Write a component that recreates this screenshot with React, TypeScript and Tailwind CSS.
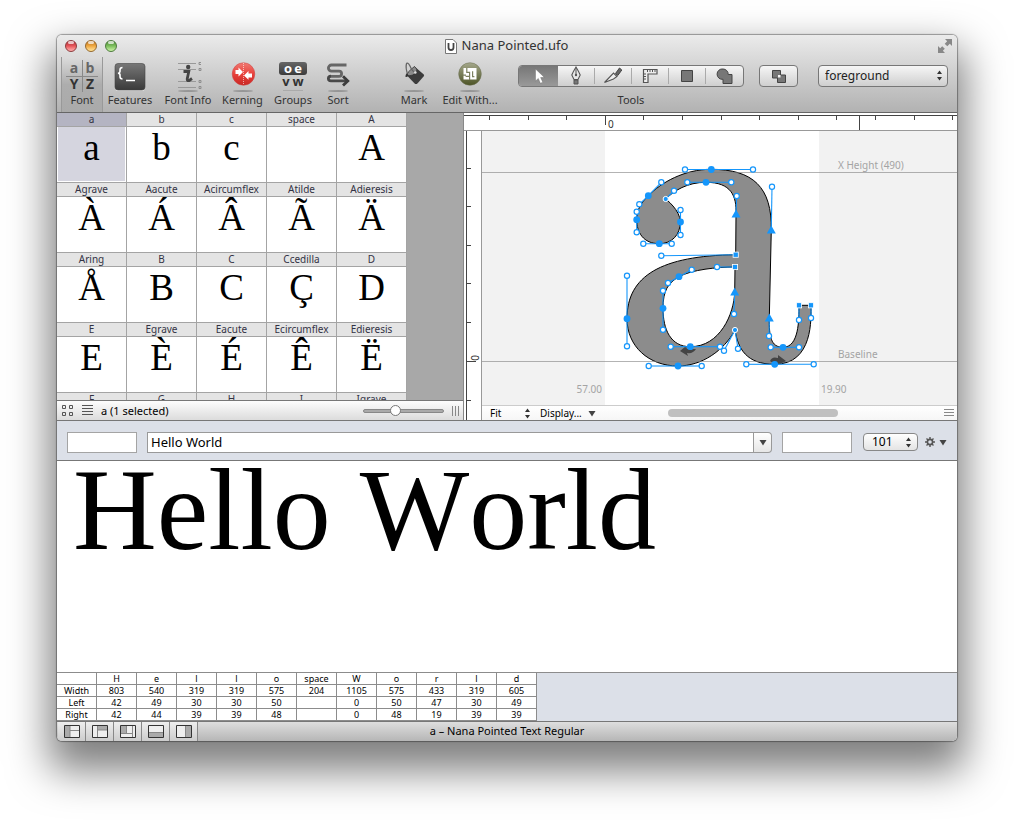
import React, { useState } from "react";

const rows: [string, string][][] = [
  [["a", "a"], ["b", "b"], ["c", "c"], ["space", ""], ["A", "A"]],
  [["Agrave", "À"], ["Aacute", "Á"], ["Acircumflex", "Â"], ["Atilde", "Ã"], ["Adieresis", "Ä"]],
  [["Aring", "Å"], ["B", "B"], ["C", "C"], ["Ccedilla", "Ç"], ["D", "D"]],
  [["E", "E"], ["Egrave", "È"], ["Eacute", "É"], ["Ecircumflex", "Ê"], ["Edieresis", "Ë"]],
  [["F", "F"], ["G", "G"], ["H", "H"], ["I", "I"], ["Igrave", "Ì"]],
];

const metrics: { label: string; values: string[] }[] = [
  { label: "Width", values: ["803", "540", "319", "319", "575", "204", "1105", "575", "433", "319", "605"] },
  { label: "Left", values: ["42", "49", "30", "30", "50", "", "0", "50", "47", "30", "49"] },
  { label: "Right", values: ["42", "44", "39", "39", "48", "", "0", "48", "19", "39", "39"] },
];
const metricHeads = ["H", "e", "l", "l", "o", "space", "W", "o", "r", "l", "d"];

/* ---------- toolbar icons ---------- */

function Shadow() {
  return <ellipse cx="16" cy="31" rx="10" ry="1" fill="#000" opacity="0.22" />;
}

function FontIcon() {
  return (
    <span className="relative grid h-8 w-8 grid-cols-2 grid-rows-2 place-items-center font-['Open_Sans',sans-serif] text-[14px] font-bold leading-4">
      <span className="text-[#666]">a</span>
      <span className="text-[#666]">b</span>
      <span className="text-[#333]">Y</span>
      <span className="text-[#333]">Z</span>
      <span className="absolute inset-x-0 top-4 h-px bg-[#888]" />
      <span className="absolute inset-y-0 left-4 w-px bg-[#888]" />
    </span>
  );
}

function FeaturesIcon() {
  return (
    <svg width="32" height="32" viewBox="0 0 32 32" aria-hidden="true">
      <defs>
        <linearGradient id="feat" x1="0" y1="0" x2="0" y2="1">
          <stop offset="0" stopColor="#777" />
          <stop offset="1" stopColor="#3a3a3a" />
        </linearGradient>
      </defs>
      <rect x="1" y="4.5" width="30" height="26.5" rx="3" fill="#f4f4f4" opacity="0.7" />
      <rect x="1" y="3.5" width="30" height="26.5" rx="3" fill="url(#feat)" stroke="#444" strokeWidth="0.6" />
      <path d="M8.5 7.5 Q6 7.5 6 9.8 V11.4 Q6 13 4 13.2 Q6 13.4 6 15 V16.6 Q6 19 8.5 19" fill="none" stroke="#fff" strokeWidth="1.6" />
      <path d="M12 20.5 H21" stroke="#fff" strokeWidth="1.6" />
    </svg>
  );
}

function InfoIcon() {
  return (
    <svg width="32" height="32" viewBox="0 0 32 32" aria-hidden="true">
      <Shadow />
      <path d="M6 3.5 H24 M6 9.5 H24 M6 21.5 H24 M6 27.5 H24" stroke="#999" />
      <path d="M29 2.5 H27 V4.5 H29 M27 8.5 H29 V10.5 H27 Z M27 20.5 H29 V22.5 H27 Z M27 26.5 H29 V28.5 H27 Z" fill="none" stroke="#888" strokeWidth="0.9" />
      <circle cx="16.2" cy="7" r="2.2" fill="#444" />
      <path d="M11.5 11.5 H16.8 L15.2 19 Q15 21 17 20.6 L20 18.5" fill="none" stroke="#444" strokeWidth="2.8" />
    </svg>
  );
}

function KerningIcon() {
  return (
    <svg width="32" height="32" viewBox="0 0 32 32" aria-hidden="true">
      <defs>
        <linearGradient id="kern" x1="0" y1="0" x2="0" y2="1">
          <stop offset="0" stopColor="#f07a72" />
          <stop offset="0.5" stopColor="#e8413c" />
          <stop offset="1" stopColor="#c92824" />
        </linearGradient>
      </defs>
      <Shadow />
      <circle cx="16.5" cy="14" r="11.3" fill="url(#kern)" stroke="#c44" strokeWidth="0.5" />
      <path d="M16.5 3 V25" stroke="#fff" strokeDasharray="1 1" opacity="0.6" />
      <path d="M8.5 10 H11.5 V7.6 L16 12 L11.5 16.4 V14 H8.5 Z" fill="#fff" />
      <path d="M25 13.4 H21.5 V11 L17 15.4 L21.5 19.8 V17.4 H25 Z" fill="#fff" />
    </svg>
  );
}

function GroupsIcon() {
  return (
    <span className="flex h-8 w-8 flex-col items-center font-['Open_Sans',sans-serif] text-[13px] font-bold leading-3">
      <span className="mt-0.5 flex h-[13px] w-7 justify-around rounded-[3px] bg-linear-to-b from-[#666] to-[#3c3c3c] px-1 text-white">
        <span>o</span>
        <span>e</span>
      </span>
      <span className="flex w-7 justify-around px-0.5 text-[#333]">
        <span>v</span>
        <span>w</span>
      </span>
      <span className="mt-[3px] h-px w-5 bg-[#aaa]" />
    </span>
  );
}

function SortIcon() {
  return (
    <svg width="32" height="32" viewBox="0 0 32 32" aria-hidden="true">
      <Shadow />
      <path
        d="M24.5 5 H9.5 A3.1 3.1 0 0 0 9.5 11.2 H17 A2.6 2.6 0 0 1 17 16.4 H7.5"
        fill="none"
        stroke="#666"
        strokeWidth="2.8"
      />
      <path d="M9 16.2 Q6.4 16.2 6.4 18.5 Q6.4 20.9 9 20.9 H25" fill="none" stroke="#484848" strokeWidth="2.8" />
      <path d="M21 16.2 L25.8 20.9 L21 25.6" fill="none" stroke="#3c3c3c" strokeWidth="2.8" />
    </svg>
  );
}

function MarkIcon() {
  return (
    <svg width="32" height="32" viewBox="0 0 32 32" aria-hidden="true">
      <Shadow />
      <path d="M16.5 6.5 L25.8 14.6 Q26.5 15.5 25.6 16.6 L19.4 23.4 Q18 24.6 16.6 23.4 L9 15.5 Z" fill="#3c3c3c" />
      <path d="M16.5 6.5 Q20 9 18.5 12 Q15 16.5 9 15.5 Q9 12 16.5 6.5 Z" fill="#8c8c8c" stroke="#333" strokeWidth="0.8" />
      <path d="M17 12.5 Q14 11 12 6 Q9.5 1.5 8.4 4 Q7.5 8 9.5 14" fill="none" stroke="#666" strokeWidth="1.3" />
      <path d="M9 13 Q7 15 7.5 17 Q9 17.5 10.5 15.5 Z" fill="#333" />
      <circle cx="17.3" cy="12.5" r="1.3" fill="#ddd" />
    </svg>
  );
}

function EditIcon() {
  return (
    <svg width="32" height="32" viewBox="0 0 32 32" aria-hidden="true">
      <defs>
        <linearGradient id="edit" x1="0" y1="0" x2="0" y2="1">
          <stop offset="0" stopColor="#a5a88c" />
          <stop offset="1" stopColor="#4d5426" />
        </linearGradient>
      </defs>
      <Shadow />
      <circle cx="16" cy="14" r="11.3" fill="url(#edit)" stroke="#666a4c" strokeWidth="0.5" />
      <path d="M9.5 8 H22.5 V19.5 H9.5 Z" fill="#fff" />
      <path d="M9 15.2 H12 M12.8 8 V12.4 H15.6 V16.4 H11.6 M15.6 16.4 V20 M18.6 11.2 V16.6 H20.4" fill="none" stroke="#7c8160" strokeWidth="1.2" />
    </svg>
  );
}

function ToolItem({ label, icon, className }: { label: string; icon: React.ReactNode; className: string }) {
  return (
    <button type="button" className={`flex flex-col items-center pt-[3px] ${className}`}>
      {icon}
      <span className="whitespace-nowrap text-[11px] leading-4 text-[#333]">{label}</span>
    </button>
  );
}

/* ---------- drawing tools ---------- */

const tools: { name: string; icon: React.ReactNode }[] = [
  {
    name: "Edit",
    icon: (
      <path d="M6.5 3 V15 L9.3 12.4 L11.4 17.3 L13.8 16.2 L11.6 11.6 L15.2 11.2 Z" fill="#fff" stroke="#666" strokeWidth="0.4" />
    ),
  },
  {
    name: "Bezier",
    icon: (
      <>
        <path d="M10 1 Q7 6 5.8 9 L8 13.5 H12 L14.2 9 Q13 6 10 1 Z" fill="#e8e8e8" stroke="#555" strokeWidth="1.1" />
        <path d="M10 2 V9" stroke="#555" />
        <circle cx="10" cy="9" r="1.2" fill="#555" />
        <path d="M8 14 H12 V18 H8 Z" fill="#777" stroke="#555" />
      </>
    ),
  },
  {
    name: "Slice",
    icon: (
      <>
        <path d="M12.5 7.5 L16.5 2 L18.8 4 L14.8 9.5 Z" fill="#666" stroke="#444" />
        <path d="M1.5 16.5 L10.5 7 L14 10.5 L10.5 13 Z" fill="#eee" stroke="#555" strokeWidth="1.1" />
      </>
    ),
  },
  {
    name: "Measure",
    icon: (
      <>
        <path d="M3.5 3.5 H17 V8 H8 V16.5 H3.5 Z" fill="#eee" stroke="#555" strokeWidth="1.2" />
        <path d="M7.5 4 V6 M10 4 V6 M12.5 4 V6 M15 4 V6 M4 8 H6 M4 10.5 H6 M4 13 H6" stroke="#555" />
      </>
    ),
  },
  { name: "Square", icon: <path d="M4.5 4.5 H15.5 V15.5 H4.5 Z" fill="#777" stroke="#444" /> },
  {
    name: "Shape",
    icon: (
      <path d="M8 3 A5.2 5.2 0 0 1 13.2 8.5 H17 V17.5 H8 V13.3 A5.2 5.2 0 1 1 8 3 Z" fill="#777" stroke="#444" />
    ),
  },
];

function DrawingTools() {
  const [active, setActive] = useState(0);
  return (
    <div className="ml-1.5 flex flex-col items-center pt-2">
      <div className="flex h-[22px] rounded border border-[#777] bg-linear-to-b from-[#f6f6f6] to-[#cfcfcf]">
        {tools.map((t, i) => (
          <button
            key={t.name}
            type="button"
            aria-label={t.name}
            aria-pressed={i === active}
            onClick={() => setActive(i)}
            className={`flex items-center ${i === 0 ? "w-[39px] rounded-l-[3px]" : "w-[37px]"} ${
              i === active ? "bg-linear-to-b from-[#777] to-[#999]" : ""
            }`}
          >
            <span className="flex flex-1 justify-center">
              <svg width="20" height="20" viewBox="0 0 20 20" aria-hidden="true">{t.icon}</svg>
            </span>
            {i > 0 && i < 5 && <span className="h-4 w-px bg-[#aaa]" />}
          </button>
        ))}
      </div>
      <span className="mt-[5px] text-[11px] leading-4 text-[#333]">Tools</span>
    </div>
  );
}

function UpDown({ className }: { className: string }) {
  return (
    <svg width="7" height="11" viewBox="0 0 7 11" aria-hidden="true" className={className}>
      <path d="M3.5 0.5 L6 4 H1 Z M3.5 10.5 L6 7 H1 Z" fill="#333" />
    </svg>
  );
}

function DownArrow() {
  return (
    <svg width="8" height="7" viewBox="0 0 8 7" aria-hidden="true">
      <path d="M0.5 1 H7.5 L4 6.5 Z" fill="#444" />
    </svg>
  );
}

function TitleBar() {
  const lights = [
    "from-[#a83038] via-[#e8555a] to-[#ffb0b0] border-[#8c3a3c]",
    "from-[#b9731f] via-[#f0a840] to-[#ffe69a] border-[#94672c]",
    "from-[#4d8838] via-[#7cbf5c] to-[#cdf5a8] border-[#4c7a3c]",
  ];
  return (
    <div className="flex h-[22px] items-center pl-2 pr-1">
      <div className="flex w-16 gap-2">
        {["Close", "Minimize", "Zoom"].map((n, i) => (
          <button key={n} type="button" aria-label={n} className={`relative h-3 w-3 rounded-full border bg-linear-to-b ${lights[i]}`}>
            <span className="absolute left-[2px] top-0 h-[3px] w-1.5 rounded-full bg-white/70" />
          </button>
        ))}
      </div>
      <h1 className="flex flex-1 items-center justify-center gap-1 text-[13px] text-[#333]">
        <svg width="14" height="17" viewBox="0 0 14 17" aria-hidden="true">
          <path d="M1.5 1.5 H9 L12.5 5 V15.5 H1.5 Z" fill="#fff" stroke="#777" />
          <path d="M4.5 5 V9.5 Q4.5 12 7 12 T9.5 9.5 V5" fill="none" stroke="#444" strokeWidth="1.8" />
        </svg>
        Nana Pointed.ufo
      </h1>
      <div className="flex w-[70px] justify-end">
        <button type="button" aria-label="Full screen">
          <svg width="16" height="16" viewBox="0 0 16 16" aria-hidden="true">
            <path d="M8 1 H15 V8 L12.8 5.8 L10.3 8.3 L7.7 5.7 L10.2 3.2 Z" fill="#888" />
            <path d="M8 15 H1 V8 L3.2 10.2 L5.2 8.2 L7.8 10.8 L5.8 12.8 Z" fill="#888" />
          </svg>
        </button>
      </div>
    </div>
  );
}

function Toolbar() {
  return (
    <div className="flex h-[55px] items-stretch pl-1 pr-[9px]">
      <ToolItem
        label="Font"
        icon={<FontIcon />}
        className="w-[42px] border-x border-[#999] bg-linear-to-b from-[#dcdcdc] via-[#adadad] to-[#aaa]"
      />
      <ToolItem label="Features" icon={<FeaturesIcon />} className="w-[54px]" />
      <ToolItem label="Font Info" icon={<InfoIcon />} className="w-[62px]" />
      <ToolItem label="Kerning" icon={<KerningIcon />} className="w-[47px]" />
      <ToolItem label="Groups" icon={<GroupsIcon />} className="w-[54px]" />
      <ToolItem label="Sort" icon={<SortIcon />} className="w-9" />
      <ToolItem label="Mark" icon={<MarkIcon />} className="ml-11 w-7" />
      <ToolItem label="Edit With..." icon={<EditIcon />} className="w-[84px]" />
      <DrawingTools />
      <button
        type="button"
        aria-label="Boolean operations"
        className="ml-[15px] mt-2 flex h-[22px] w-[39px] items-center justify-center rounded border border-[#777] bg-linear-to-b from-[#f6f6f6] to-[#cfcfcf]"
      >
        <svg width="16" height="16" viewBox="0 0 16 16" aria-hidden="true">
          <path d="M1.5 2.5 H9.5 V7 H14.5 V14.5 H6.5 V10 H1.5 Z" fill="#777" stroke="#444" />
          <path d="M7 7 H9.5 V9.5 H7 Z" fill="#f4f4f4" />
        </svg>
      </button>
      <div className="relative ml-auto mt-2 h-[22px] w-[130px]">
        <select
          aria-label="Layer"
          className="block h-[22px] w-full appearance-none rounded border border-[#777] bg-linear-to-b from-[#f6f6f6] to-[#cfcfcf] px-1.5 text-[12px] leading-5 text-[#222]"
        >
          <option>foreground</option>
          <option>background</option>
        </select>
        <UpDown className="pointer-events-none absolute right-[5px] top-[5px]" />
      </div>
    </div>
  );
}

/* ---------- glyph overview ---------- */

function GlyphGrid() {
  const [selected, setSelected] = useState("a");
  return (
    <section className="flex w-[407px] shrink-0 flex-col border-r border-[#888]">
      <div className="flex-1 overflow-hidden bg-[#a8a8a8]">
        <div className="grid w-[350px] grid-cols-5">
          {rows.flat().map(([name, glyph]) => {
            const on = name === selected;
            return (
              <button
                key={name}
                type="button"
                onClick={() => setSelected(name)}
                className="flex h-[70px] flex-col border-b border-r border-[#a4a4a4] bg-white"
              >
                <span
                  className={`h-[14px] w-full border-b border-[#a4a4a4] text-center text-[10px] leading-[13px] text-[#334] ${
                    on ? "bg-[#b4b4c2]" : "bg-[#e4e4e4]"
                  }`}
                >
                  {name}
                </span>
                <span
                  className={`w-full flex-1 overflow-hidden border border-t-0 text-center font-['Liberation_Serif',serif] text-[37px] leading-[41px] text-black ${
                    on ? "border-white bg-[#d5d5df]" : "border-transparent"
                  }`}
                >
                  {glyph}
                </span>
              </button>
            );
          })}
        </div>
      </div>
      <div className="flex h-5 items-center border-t border-[#777] bg-linear-to-b from-[#fdfdfd] to-[#dcdcdc] pl-1 pr-[3px]">
        <button type="button" aria-label="Grid view">
          <svg width="13" height="13" viewBox="0 0 13 13" aria-hidden="true">
            <path d="M1.5 1.5 h3 v3 h-3 Z M8.5 1.5 h3 v3 h-3 Z M1.5 8.5 h3 v3 h-3 Z M8.5 8.5 h3 v3 h-3 Z" fill="none" stroke="#555" />
          </svg>
        </button>
        <button type="button" aria-label="List view" className="ml-2">
          <svg width="11" height="11" viewBox="0 0 11 11" aria-hidden="true">
            <path d="M0 0.5 H11 M0 3.5 H11 M0 6.5 H11 M0 9.5 H11" stroke="#555" />
          </svg>
        </button>
        <span className="ml-2 text-[11px] leading-4">a (1 selected)</span>
        <input
          type="range"
          aria-label="Cell size"
          defaultValue={38}
          className="ml-auto h-[4px] w-[81px] appearance-none rounded-full border border-[#888] bg-[#aaa] [&::-webkit-slider-thumb]:h-[11px] [&::-webkit-slider-thumb]:w-[11px] [&::-webkit-slider-thumb]:appearance-none [&::-webkit-slider-thumb]:rounded-full [&::-webkit-slider-thumb]:border [&::-webkit-slider-thumb]:border-[#777] [&::-webkit-slider-thumb]:bg-white"
        />
        <svg width="8" height="10" viewBox="0 0 8 10" aria-hidden="true" className="ml-2">
          <path d="M0.5 0 V10 M3.5 0 V10 M6.5 0 V10" stroke="#888" />
        </svg>
      </div>
    </section>
  );
}

/* ---------- glyph editor ---------- */

type P = [number, number];
const handles: [P, P][] = [
  [[711, 169.5], [685, 169.5]], [[711, 169.5], [753, 169.5]],
  [[648.3, 195.7], [661.3, 182.3]], [[648.3, 195.7], [639.3, 204.3]],
  [[636.7, 219.7], [636.7, 211.7]], [[636.7, 219.7], [636.7, 232.3]],
  [[659.3, 243.7], [643.3, 243.7]], [[659.3, 243.7], [671.7, 243.7]],
  [[680.5, 222], [680.5, 210]], [[680.5, 222], [680.5, 235]],
  [[665.7, 199], [674, 190.7]],
  [[706, 182.3], [687.3, 182.3]], [[706, 182.3], [731.3, 182.3]],
  [[736, 214], [736.7, 196]], [[771.3, 230], [772, 186.7]],
  [[735.7, 254.7], [661.3, 255.7]], [[735, 267], [717, 267]],
  [[679, 276.7], [691.7, 269.7]], [[679, 276.7], [668, 283]],
  [[663, 308.3], [663, 290.7]], [[663, 308.3], [663, 329.7]],
  [[627, 318.7], [627, 275.7]], [[627, 318.7], [627, 346.3]],
  [[690.3, 346.7], [670.7, 346.7]], [[690.3, 346.7], [720, 346.7]],
  [[678, 366], [648.7, 366]], [[678, 366], [701.7, 366]],
  [[735, 330], [724, 350.7]], [[735, 330], [738, 348.7]],
  [[734.7, 292], [734, 314]], [[769.3, 318], [769, 336]],
  [[783, 347.3], [770.7, 347.3]], [[783, 347.3], [799, 347.3]],
  [[799, 305.3], [799, 320]], [[811, 305.3], [811, 318]],
  [[774.7, 364.3], [746.3, 364.3]], [[774.7, 364.3], [813.7, 364.3]],
];
const curvePoints: P[] = [
  [711.3, 169.5], [648.3, 195.7], [636.7, 219.7], [659.3, 243.7], [680.5, 222], [706, 182.3],
  [679, 276.7], [663, 308.3], [627, 318.7], [690.3, 346.7], [678, 366], [783, 347.3], [774.7, 364.3],
];
const cornerDots: P[] = [[665.7, 199], [735, 330]];
const squares: P[] = [[735.7, 254.7], [735, 267], [799, 305.3], [811, 305.3]];
const triangles: P[] = [[736, 214], [771.3, 230], [734.7, 292], [769.3, 318]];

const outline =
  "M711 169.3 C753 169.3 772 187 771.3 230 L769.3 318 C769 336 770.7 347.3 783 347.3 C799 347.3 799 320 799 305.3 L811 305.3 C811 318 813.7 364.3 774.7 364.3 C746.3 364.3 738 348.7 735 330 C724 350.7 701.7 366 678 366 C648.7 366 627 346.3 627 318.7 C627 275.7 661.3 255.7 735.7 254.7 L736 214 C736.7 196 731.3 182.3 706 182.3 C687.3 182.3 674 190.7 665.7 199 C665.7 199 680.3 210 680.3 222 C680.3 235 671.7 243.7 659.3 243.7 C643.3 243.7 636.7 232.3 636.7 219.7 C636.7 211.7 639.3 204.3 648.3 195.7 C661.3 182.3 684.7 169.3 711 169.3 Z M735 267 C717 267 691.7 269.7 679 276.7 C668 283 663 290.7 663 308.3 C663 329.7 670.7 346.7 690.3 346.7 C720 346.7 734 314 734.7 292 Z";

function Outline() {
  return (
    <svg width="475" height="274" viewBox="482 131 475 274" className="absolute left-0 top-0 overflow-visible" role="img" aria-label="Outline of the glyph a">
      <path d={outline} fill="#8c8c8c" stroke="#000" fillRule="evenodd" />
      <path d="M482 172.5 H2400 M482 361.5 H2400" stroke="#808080" strokeOpacity="0.6" />
      <path d="M696 349 Q693 354 687 353 L688 356 L680 351 L686 346 L687 349 Z" fill="#444" />
      <path d="M770 361 Q772 356 778 358 V355 L786 361 L780 364 L774 364 Z" fill="#444" />
      {handles.map(([a, b], i) => (
        <g key={i} stroke="#1596fb">
          <path d={`M${a[0]} ${a[1]} L${b[0]} ${b[1]}`} strokeWidth="1.1" />
          <circle cx={b[0]} cy={b[1]} r="2.6" fill="#fff" strokeWidth="1.2" />
        </g>
      ))}
      {curvePoints.map(([x, y], i) => (
        <circle key={i} cx={x} cy={y} r="3.4" fill="#1596fb" />
      ))}
      {cornerDots.map(([x, y], i) => (
        <circle key={i} cx={x} cy={y} r="2.6" fill="#1596fb" stroke="#fff" />
      ))}
      {squares.map(([x, y], i) => (
        <rect key={i} x={x - 2.6} y={y - 2.6} width="5.2" height="5.2" fill="#1596fb" stroke="#fff" strokeWidth="0.8" />
      ))}
      {triangles.map(([x, y], i) => (
        <path key={i} d={`M${x} ${y - 4.5} L${x + 4.5} ${y + 3.5} H${x - 4.5} Z`} fill="#1596fb" />
      ))}
    </svg>
  );
}

function GlyphEditor() {
  const hTicks = Array.from({ length: 13 }, (_, i) => 489 + i * 38.6);
  const vTicks = Array.from({ length: 6 }, (_, i) => 168.5 + i * 38.6);
  return (
    <section className="flex min-w-0 flex-1 flex-col bg-white">
      <div className="relative h-[18px] overflow-hidden border-b border-[#999]">
        <svg width="493" height="17" viewBox="464 113 493 17" aria-hidden="true" className="absolute left-0 top-0 overflow-visible">
          <path d="M464 115.5 H2400" stroke="#444" />
          {hTicks.map((x, i) => (
            <path key={i} d={`M${Math.round(x) + 0.5} 116 V${i === 3 ? 125 : 120}`} stroke="#444" />
          ))}
          <path d="M859.5 116 V130" stroke="#444" />
        </svg>
        <span className="absolute left-[144px] top-[5px] text-[10px] leading-3 text-[#333]">0</span>
      </div>
      <div className="flex min-h-0 flex-1">
        <div className="relative w-[18px] shrink-0 overflow-hidden border-r border-[#999]">
          <svg width="17" height="289" viewBox="464 131 17 289" aria-hidden="true">
            <path d="M466.5 131 V420" stroke="#444" />
            {vTicks.map((y, i) => (
              <path key={i} d={`M467 ${Math.round(y) - 0.5} H${i === 5 ? 476 : 471}`} stroke="#444" />
            ))}
            <path d="M467 400.5 H471" stroke="#444" />
          </svg>
          <span className="absolute left-2 top-[221px] -rotate-90 text-[10px] leading-3 text-[#333]">0</span>
        </div>
        <div className="flex min-w-0 flex-1 flex-col">
          <div className="relative flex flex-1 overflow-hidden text-[10px] leading-3 text-[#a4a4a4]">
            <div className="flex w-[123px] items-end justify-end bg-[#f2f2f2] pb-2.5 pr-[3px]">57.00</div>
            <div className="w-[214px] bg-white" />
            <div className="flex flex-1 flex-col bg-[#f2f2f2] pt-7">
              <span className="ml-[19px]">X Height (490)</span>
              <span className="ml-[19px] mt-[177px]">Baseline</span>
              <span className="ml-0.5 mt-[23px]">19.90</span>
            </div>
            <Outline />
          </div>
          <div className="flex h-[15px] items-center border-t border-[#ccc] bg-linear-to-b from-white to-[#f6f6f6] pr-[3px] text-[10px] leading-[14px]">
            <div className="relative">
              <select aria-label="Zoom level" className="block h-[14px] w-[50px] appearance-none bg-transparent pl-2">
                <option>Fit</option>
                <option>100%</option>
              </select>
              <UpDown className="pointer-events-none absolute right-px top-[2px]" />
            </div>
            <button type="button" className="ml-2 flex w-[56px] items-center justify-between">
              Display... <DownArrow />
            </button>
            <div className="ml-[72px] mr-auto h-2 w-[170px] rounded-full bg-[#c0c0c0]" />
            <svg width="10" height="8" viewBox="0 0 10 8" aria-hidden="true">
              <path d="M0 0.5 H10 M0 3.5 H10 M0 6.5 H10" stroke="#888" />
            </svg>
          </div>
        </div>
      </div>
    </section>
  );
}

/* ---------- space center ---------- */

function PreviewBar({ text, onText }: { text: string; onText: (s: string) => void }) {
  return (
    <div className="flex h-10 items-center border-b border-[#777] bg-[#dce0e8] px-2.5 pt-[3px]">
      <input aria-label="Text before" className="h-[21px] w-[70px] border border-[#a4a4a4] bg-white px-1 text-[12px]" />
      <div className="ml-2.5 flex h-[21px] flex-1">
        <input
          aria-label="Preview text"
          value={text}
          onChange={(e) => onText(e.target.value)}
          className="min-w-0 flex-1 border border-[#999] bg-white px-[3px] text-[13px] leading-5"
        />
        <button
          type="button"
          aria-label="Recent texts"
          className="flex w-[18px] items-center justify-center rounded-r border border-l-0 border-[#999] bg-linear-to-b from-white to-[#e6e6e6]"
        >
          <DownArrow />
        </button>
      </div>
      <input aria-label="Text after" className="ml-2.5 h-[21px] w-[70px] border border-[#a4a4a4] bg-white px-1 text-[12px]" />
      <div className="relative ml-[11px] w-[55px]">
        <select
          aria-label="Point size"
          className="block h-[18px] w-full appearance-none rounded border border-[#888] bg-linear-to-b from-white to-[#e4e4e4] pl-2 text-[12px] leading-4"
        >
          <option>101</option>
          <option>150</option>
        </select>
        <UpDown className="pointer-events-none absolute right-[6px] top-1" />
      </div>
      <button type="button" aria-label="Options" className="ml-[7px] flex items-center gap-1">
        <svg width="10" height="10" viewBox="0 0 10 10" aria-hidden="true">
          <path d="M5 0 V10 M0 5 H10 M1.5 1.5 L8.5 8.5 M8.5 1.5 L1.5 8.5" stroke="#555" strokeWidth="1.4" />
          <circle cx="5" cy="5" r="2.6" fill="#dce0e8" stroke="#555" strokeWidth="1.6" />
        </svg>
        <DownArrow />
      </button>
    </div>
  );
}

function MetricsTable() {
  const cell = "h-3 w-10 border border-t-0 border-l-0 border-[#8c8c8c] bg-white p-0 text-center font-normal leading-[11px]";
  return (
    <div className="border-t border-[#8c8c8c] bg-[#dce0e8]">
      <table className="table-fixed border-separate border-spacing-0 text-[9px]">
        <thead>
          <tr>
            <td className={cell} />
            {metricHeads.map((h, i) => (
              <th key={i} scope="col" className={cell}>{h}</th>
            ))}
          </tr>
        </thead>
        <tbody>
          {metrics.map((m) => (
            <tr key={m.label}>
              <th scope="row" className={cell}>{m.label}</th>
              {m.values.map((v, i) => (
                <td key={i} className={cell}>{v}</td>
              ))}
            </tr>
          ))}
        </tbody>
      </table>
    </div>
  );
}

const panes: { name: string; fill: string; lines: string }[] = [
  { name: "Toggle glyph list", fill: "M1 1 H6 V12 H1 Z", lines: "M6 1 V12 M6 5.5 H15" },
  { name: "Toggle editor", fill: "M6 1 H15 V5 H6 Z", lines: "M5.5 1 V12 M6 5 H15" },
  { name: "Toggle split", fill: "M1 1 H6 V8 H1 Z", lines: "M6.5 1 V8 M1 8.5 H12 M12.5 1 V12" },
  { name: "Toggle preview", fill: "M1 7 H15 V12 H1 Z", lines: "M1 7.5 H15" },
  { name: "Toggle inspector", fill: "M9 1 H15 V12 H9 Z", lines: "M9.5 1 V12" },
];

function BottomBar() {
  return (
    <footer className="relative flex h-5 border-t border-[#777] bg-linear-to-b from-[#dedede] to-[#b6b6b6] pl-px">
      {panes.map((p) => (
        <button
          key={p.name}
          type="button"
          aria-label={p.name}
          className="flex w-7 items-center justify-center border-r border-[#888] bg-linear-to-b from-[#eee] to-[#ccc]"
        >
          <svg width="16" height="13" viewBox="0 0 16 13" aria-hidden="true">
            <path d="M0.5 0.5 H15.5 V12.5 H0.5 Z" fill="#eee" />
            <path d={p.fill} fill="#aaa" />
            <path d={p.lines} stroke="#888" />
            <path d="M0.5 0.5 H15.5 V12.5 H0.5 Z" fill="none" stroke="#333" />
          </svg>
        </button>
      ))}
      <p className="pointer-events-none absolute inset-0 text-center text-[11px] leading-[18px]">a – Nana Pointed Text Regular</p>
    </footer>
  );
}

export default function App() {
  const [text, setText] = useState("Hello World");
  return (
    <main className="flex min-h-screen bg-white px-[57px] pb-[79px] pt-[35px] font-['Noto_Sans','Open_Sans',sans-serif] text-black">
      <div className="flex min-w-0 flex-1 flex-col overflow-hidden rounded-[5px] bg-white shadow-[0_22px_40px_8px_rgba(0,0,0,0.5),0_0_1px_1px_rgba(0,0,0,0.35)]">
        <header className="border-b border-[#666] bg-linear-to-b from-[#ebebeb] to-[#b2b2b2]">
          <TitleBar />
          <Toolbar />
        </header>
        <div className="flex h-[308px] border-b border-[#777]">
          <GlyphGrid />
          <GlyphEditor />
        </div>
        <PreviewBar text={text} onText={setText} />
        <div className="flex-1 overflow-hidden pl-4 font-['Liberation_Serif',serif] text-[116px] leading-[98px] [font-kerning:none]">{text}</div>
        <MetricsTable />
        <BottomBar />
      </div>
    </main>
  );
}
